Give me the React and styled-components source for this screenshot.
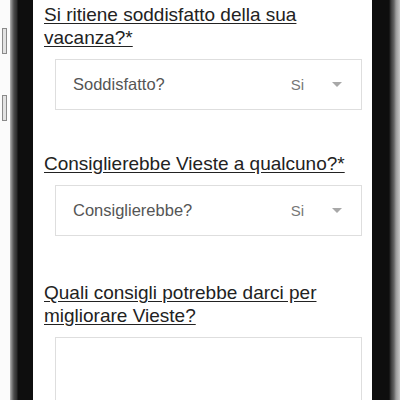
import React from "react";
import styled, { createGlobalStyle } from "styled-components";

const GlobalStyle = createGlobalStyle`
    html, body {
        margin: 0;
        padding: 0;
        background: #fafafa;
        overflow: hidden;
    }
    body {
        font-family: "Liberation Sans", Arial, sans-serif;
    }
`;

const questions = [
    { label: "Si ritiene soddisfatto della sua vacanza?*", placeholder: "Soddisfatto?", value: "Si" },
    { label: "Consiglierebbe Vieste a qualcuno?*", placeholder: "Consiglierebbe?", value: "Si" },
];

export default function App() {
    return (
        <>
            <GlobalStyle />
            <Phone>
                <Edge>
                    <SideButton $top={28} />
                    <SideButton $top={41} />
                </Edge>
                <BezelLeft />
                <Screen>
                    {questions.map((q) => (
                        <Field key={q.label}>
                            <Question>{q.label}</Question>
                            <SelectBox>
                                <Placeholder>{q.placeholder}</Placeholder>
                                <Value>{q.value}</Value>
                                <Arrow />
                            </SelectBox>
                        </Field>
                    ))}
                    <Field $extra={3}>
                        <Question>Quali consigli potrebbe darci per migliorare Vieste?</Question>
                        <TextArea />
                    </Field>
                </Screen>
                <BezelRight />
            </Phone>
        </>
    );
}

const Phone = styled.div`
    display: flex;
    width: 400px;
    height: 400px;
    overflow: hidden;
`;

const Edge = styled.div`
    display: flex;
    flex-direction: column;
    width: 10px;
    background: #fbfbfb;
`;

const SideButton = styled.div`
    margin-top: ${(p) => p.$top}px;
    margin-left: 2px;
    width: 3px;
    height: 24px;
    border: 1px solid #8a8a8a;
    background: #e2e2e2;
`;

const BezelLeft = styled.div`
    width: 23px;
    background: linear-gradient(
        to right,
        #b5b5b5 0px,
        #7a7a7a 2px,
        #4a4a4a 4px,
        #2c2c2c 7px,
        #0e0e0e 8px,
        #0e0e0e 23px
    );
`;

const BezelRight = styled.div`
    width: 28px;
    background: linear-gradient(
        to right,
        #0e0e0e 0px,
        #0e0e0e 17px,
        #3a3a3a 19px,
        #666 22px,
        #9a9a9a 24px,
        #c8c8c8 28px
    );
`;

const Screen = styled.div`
    flex: 1;
    display: flex;
    flex-direction: column;
    gap: 42px;
    background: #fff;
    padding: 3px 10px 0 11px;
`;

const Field = styled.div`
    display: flex;
    flex-direction: column;
    gap: 10px;
    margin-top: ${(p) => p.$extra || 0}px;
`;

const Question = styled.div`
    font-size: 19px;
    line-height: 23px;
    color: #222;
    text-decoration: underline;
    text-underline-offset: 2px;
`;

const SelectBox = styled.div`
    display: flex;
    align-items: center;
    height: 49px;
    margin-left: 11px;
    padding: 0 19px 0 17px;
    border: 1px solid #dedede;
`;

const Placeholder = styled.span`
    flex: 1;
    font-size: 16.5px;
    color: #555;
`;

const Value = styled.span`
    font-size: 15px;
    color: #777;
    margin-right: 28px;
`;

const Arrow = styled.span`
    width: 0;
    height: 0;
    border-left: 5px solid transparent;
    border-right: 5px solid transparent;
    border-top: 5px solid #a8a8a8;
`;

const TextArea = styled.div`
    height: 120px;
    margin-left: 11px;
    border: 1px solid #dedede;
    border-bottom: none;
`;
